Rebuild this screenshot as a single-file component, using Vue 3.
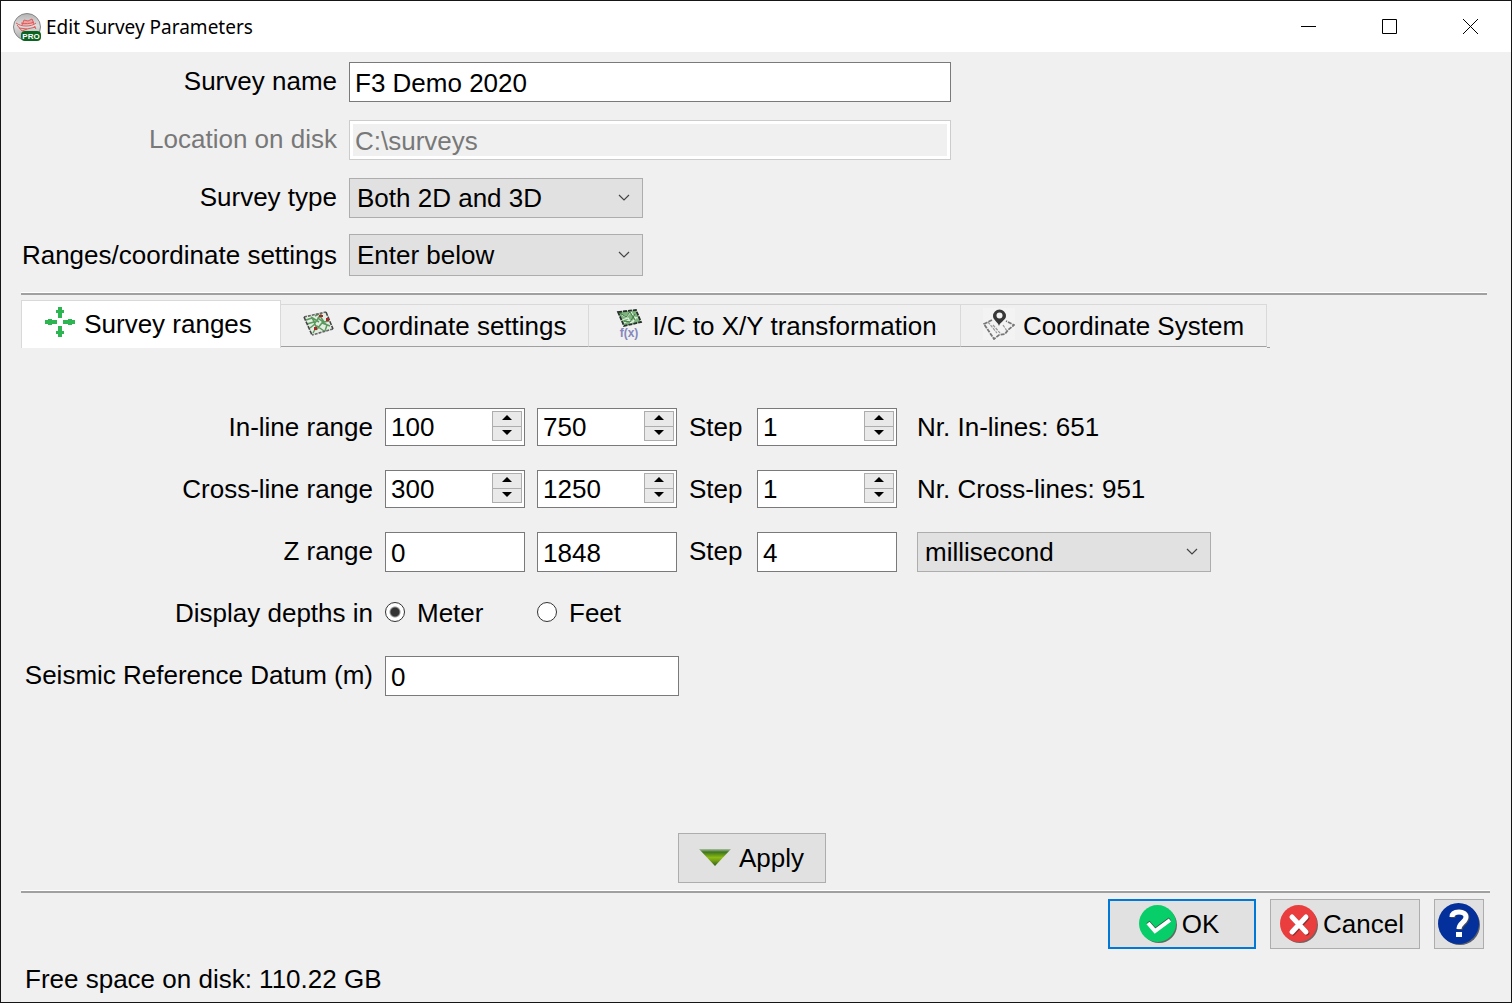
<script setup>
import { ref, reactive, computed } from 'vue'

const surveyName = ref('F3 Demo 2020')
const location = ref('C:\\surveys')
const surveyType = ref('Both 2D and 3D')
const settings = ref('Enter below')
const activeTab = ref('ranges')
const zUnit = ref('millisecond')
const depthUnit = ref('m')
const datum = ref('0')
const z = reactive({ start: '0', stop: '1848', step: '4' })

const tabs = [
  { id: 'ranges', label: 'Survey ranges' },
  { id: 'coords', label: 'Coordinate settings' },
  { id: 'transform', label: 'I/C to X/Y transformation' },
  { id: 'system', label: 'Coordinate System' },
]

const lines = reactive([
  { id: 'inl', label: 'In-line range', count: 'Nr. In-lines', start: 100, stop: 750, step: 1 },
  { id: 'crl', label: 'Cross-line range', count: 'Nr. Cross-lines', start: 300, stop: 1250, step: 1 },
])
const counts = computed(() =>
  lines.map((l) => Math.floor((l.stop - l.start) / Math.max(1, l.step)) + 1)
)
</script>

<template>
  <div class="window">
    <header class="titlebar">
      <svg class="app-icon" viewBox="0 0 28 28" aria-hidden="true">
        <defs>
          <linearGradient id="ball" x1="0" y1="0" x2="0" y2="1">
            <stop offset="0" stop-color="#b4b4b4" />
            <stop offset="0.45" stop-color="#dedede" />
            <stop offset="1" stop-color="#a8a8a8" />
          </linearGradient>
        </defs>
        <circle cx="14" cy="14" r="13.5" fill="url(#ball)" stroke="#858585" />
        <path d="M9 12l2-5 4 1 4-2 2 5z" fill="#e8a5a5" />
        <path d="M3 10c3 2 6 3 10 3s8-1 10-3M9 12l2-5 4 1 4-2 2 5M8 10c4 1 9 1 13-1M4 12l5 6M6 15l8 1 9-2M9 18l5-2M21 13l2 3" fill="none" stroke="#e25a5a" />
        <rect x="8" y="18" width="20" height="10" rx="4" fill="#0b6320" />
        <text x="18" y="26" text-anchor="middle" class="pro">PRO</text>
      </svg>
      <h1>Edit Survey Parameters</h1>
      <div class="controls">
        <button type="button" aria-label="Minimize">
          <svg viewBox="0 0 15 15"><path d="M0 7.5h15" /></svg>
        </button>
        <button type="button" aria-label="Maximize">
          <svg viewBox="0 0 15 15"><path d="M.5 .5h14v14h-14z" /></svg>
        </button>
        <button type="button" aria-label="Close">
          <svg viewBox="0 0 15 15"><path d="M0 0l15 15M15 0L0 15" /></svg>
        </button>
      </div>
    </header>

    <form class="content" @submit.prevent>
      <section class="general">
        <label for="name">Survey name</label>
        <input id="name" v-model="surveyName" type="text" class="long" />
        <label for="loc" class="off">Location on disk</label>
        <input id="loc" v-model="location" type="text" class="long" disabled />
        <label for="type">Survey type</label>
        <select id="type" v-model="surveyType" class="wide">
          <option>Both 2D and 3D</option>
          <option>Only 3D</option>
          <option>Only 2D</option>
        </select>
        <label for="settings">Ranges/coordinate settings</label>
        <select id="settings" v-model="settings" class="wide tall">
          <option>Enter below</option>
        </select>
      </section>

      <hr />

      <div class="tabs" role="tablist">
        <button
          v-for="tab in tabs"
          :key="tab.id"
          type="button"
          role="tab"
          :aria-selected="activeTab === tab.id"
          class="tab"
          :class="{ active: activeTab === tab.id }"
          @click="activeTab = tab.id"
        >
          <svg v-if="tab.id === 'ranges'" class="tab-icon" viewBox="0 0 32 32">
            <g fill="#2db552">
              <path d="M14 12V7h-2V4h2V1h4v3h2v3h-2v5z" />
              <path d="M14 20v5h-2v3h2v3h4v-3h2v-3h-2v-5z" />
              <path d="M13 14H8v-1H4v1H1v4h3v1h4v-1h5z" />
              <path d="M19 14h5v-1h4v1h3v4h-3v1h-4v-1h-5z" />
            </g>
          </svg>
          <svg v-else-if="tab.id === 'coords'" class="tab-icon" viewBox="0 0 32 32">
            <path d="M2 9l22-5 7 17-21 6z" fill="#e4eee2" />
            <path d="M4 12l6-2 3 5 5-7 4 6 5-1M5 16l7-2 3 7 5-6 8 3M8 20l5-4M11 25l4-7 7 5M9 9l8 5M20 5l-4 5 9 7-2 6M13 8l4-2" fill="none" stroke="#5a9a5e" stroke-width="1.5" />
            <path d="M2 9l22-5M31 21l-21 6" stroke="#666" stroke-width="1.6" stroke-dasharray="3 1" />
            <path d="M2 9l8 18M24 4l7 17" stroke="#444" stroke-width="1.6" stroke-dasharray="4 1" />
            <path d="M17 7h4v2h-4zM24 10h3v3h-3zM12 19h3v3h-3z" fill="#b3202c" />
          </svg>
          <svg v-else-if="tab.id === 'transform'" class="tab-icon" viewBox="0 0 32 32">
            <path d="M6 4l18-2 5 12-17 4z" fill="#7fb47f" />
            <path d="M10 7l4 2 5-5 3 5 4 1M10 12l6-2 3 5 5-5M12 15l5-3 5 2" fill="none" stroke="#dff0de" stroke-width="1.2" />
            <path d="M8 5l6 4 4-5 5 8M12 13l6 1 5-8" fill="none" stroke="#3f7a42" />
            <path d="M6 4l18-2 5 12-17 4z" fill="none" stroke="#26302a" stroke-width="1.8" stroke-dasharray="4 1" />
            <text x="17" y="29" text-anchor="middle" class="fx">f(x)</text>
          </svg>
          <svg v-else class="tab-icon" viewBox="0 0 32 32">
            <rect width="32" height="32" fill="#f3f3f3" />
            <path d="M9 12l-8 4 10 15 5-4 6-1 3-4 6-5-8-4" fill="none" stroke="#777" stroke-width="1.8" stroke-dasharray="4 1" />
            <path d="M5 14l9 11M10 17l7 8M20 17l4 6" fill="none" stroke="#999" stroke-width="1.2" stroke-dasharray="3 1" />
            <path d="M16 18c-1-4-6-6-6-10a6 6 0 0 1 13 0c0 4-6 6-7 10z" fill="#383838" />
            <circle cx="16.500" cy="7.500" r="3" fill="#f3f3f3" />
          </svg>
          <span>{{ tab.label }}</span>
        </button>
      </div>

      <section class="panel" role="tabpanel">
        <div class="ranges">
          <template v-for="(line, i) in lines" :key="line.id">
            <label :for="line.id + '-start'">{{ line.label }}</label>
            <template v-for="field in ['start', 'stop', 'step']" :key="field">
              <label v-if="field === 'step'" :for="line.id + '-step'" class="step">Step</label>
              <div class="spin">
                <input :id="line.id + '-' + field" v-model.number="line[field]" type="number" :aria-label="line.label + ' ' + field" />
                <div class="arrows">
                  <button type="button" aria-label="Increase" @click="line[field]++">
                    <svg viewBox="0 0 10 5"><path d="M5 0l5 5H0z" /></svg>
                  </button>
                  <button type="button" aria-label="Decrease" @click="line[field]--">
                    <svg viewBox="0 0 10 5"><path d="M0 0h10L5 5z" /></svg>
                  </button>
                </div>
              </div>
            </template>
            <output class="extra">{{ line.count }}: {{ counts[i] }}</output>
          </template>

          <label for="z-start">Z range</label>
          <input id="z-start" v-model="z.start" type="text" />
          <input v-model="z.stop" type="text" aria-label="Z range stop" />
          <label for="z-step" class="step">Step</label>
          <input id="z-step" v-model="z.step" type="text" />
          <div class="extra">
            <select v-model="zUnit" class="wide" aria-label="Z unit">
              <option>millisecond</option>
              <option>meter</option>
              <option>feet</option>
            </select>
          </div>

          <span class="caption">Display depths in</span>
          <label class="radio">
            <input v-model="depthUnit" type="radio" name="depth" value="m" />Meter
          </label>
          <label class="radio rest">
            <input v-model="depthUnit" type="radio" name="depth" value="ft" />Feet
          </label>

          <label for="datum">Seismic Reference Datum (m)</label>
          <input id="datum" v-model="datum" type="text" class="wide datum" />
        </div>

        <button type="button" class="push apply">
          <svg class="arrow" viewBox="0 0 32 18">
            <defs>
              <linearGradient id="leaf" x1="0" y1="0" x2="0" y2="1">
                <stop offset="0" stop-color="#a9bfa2" />
                <stop offset="0.18" stop-color="#3d7420" />
                <stop offset="0.5" stop-color="#8cba14" />
                <stop offset="0.7" stop-color="#6f9c14" />
                <stop offset="1" stop-color="#2e5c1c" />
              </linearGradient>
            </defs>
            <path d="M0 0h32L16 17z" fill="url(#leaf)" />
          </svg>
          <span>Apply</span>
        </button>
      </section>

      <hr />

      <footer class="actions">
        <button type="submit" class="push answer default">
          <svg class="badge" viewBox="0 0 38 38">
            <circle cx="20" cy="20" r="18" fill="#5d6b63" />
            <circle cx="18.500" cy="18.500" r="18.500" fill="#07ce68" />
            <path d="M9 17l7 8 15-11" fill="none" stroke="#2c5a40" stroke-width="4" />
            <path d="M9 18l7 8 15-11" fill="none" stroke="#fff" stroke-width="4" />
          </svg>
          <span>OK</span>
        </button>
        <button type="button" class="push answer cancel">
          <svg class="badge" viewBox="0 0 38 38">
            <circle cx="20" cy="20" r="18" fill="#77605f" />
            <circle cx="18.500" cy="18.500" r="18.500" fill="#ea3e3e" />
            <path d="M13 13l14 15M27 13L13 28" fill="none" stroke="#8b3030" stroke-width="5" stroke-linecap="round" />
            <path d="M12 12l14 15M26 12L12 27" fill="none" stroke="#fff" stroke-width="5" stroke-linecap="round" />
          </svg>
          <span>Cancel</span>
        </button>
        <button type="button" class="push help" aria-label="Help">
          <svg viewBox="0 0 42 42">
            <circle cx="22" cy="22" r="20" fill="#5b5f6b" />
            <circle cx="20.500" cy="20.500" r="20.500" fill="#03309b" />
            <path d="M15 15c0-5 3-6 7-6s7 2 7 6c0 5-7 6-7 12" fill="none" stroke="#444a60" stroke-width="5" />
            <path d="M14 14c0-4 3-5 7-5s7 2 7 5c0 5-7 6-7 12" fill="none" stroke="#fff" stroke-width="5" />
            <path d="M18 29h6v5h-6z" fill="#fff" />
          </svg>
        </button>
      </footer>
    </form>
    <p class="status">Free space on disk: 110.22 GB</p>
  </div>
</template>

<style>
body {
  background: #f0f0f0;
}
</style>

<style scoped>
.window,
.window * {
  box-sizing: border-box;
}
.window {
  display: flex;
  flex-direction: column;
  min-height: 100vh;
  border: 1px solid #151515;
  background: #f0f0f0;
  color: #000;
  font: 26px/30px "Liberation Sans", Arial, sans-serif;
}
input,
select,
button {
  margin: 0;
  font: inherit;
  color: inherit;
  border-radius: 0;
}
svg {
  display: block;
  flex: none;
}

.titlebar {
  display: flex;
  align-items: center;
  height: 51px;
  padding-left: 12px;
  background: #fff;
}
.app-icon {
  width: 28px;
  height: 28px;
}
.pro {
  font: bold 8px "Liberation Sans", Arial, sans-serif;
  fill: #fff;
}
.titlebar h1 {
  margin: 0 auto 0 5px;
  font: 19px/28px "Noto Sans", sans-serif;
}
.controls {
  display: flex;
  align-self: stretch;
}
.controls button {
  display: grid;
  place-items: center;
  width: 81px;
  padding: 0;
  border: 0;
  background: none;
}
.controls svg {
  width: 15px;
  height: 15px;
}
.controls path {
  fill: none;
  stroke: #000;
}

.content {
  display: flex;
  flex: 1;
  flex-direction: column;
  padding: 10px 21px 0 20px;
}
.general {
  display: grid;
  grid-template-columns: 316px 1fr;
  gap: 18px 12px;
  grid-auto-rows: 40px;
}
label,
.caption {
  line-height: 38px;
  text-align: right;
  white-space: nowrap;
}
.off {
  color: #787878;
}
input[type="text"] {
  width: 100%;
  height: 40px;
  padding: 3px 5px 0;
  border: 1px solid #7a7a7a;
  background: #fff;
  outline: 0;
}
input.long {
  width: 602px;
}
input[type="text"]:disabled {
  border-color: #ccc;
  background: #f0f0f0;
  color: #787878;
  box-shadow: inset 0 0 0 3px #fff;
}
select {
  appearance: none;
  height: 40px;
  padding: 0 36px 0 7px;
  border: 1px solid #adadad;
  background: #e1e1e1 url("data:image/svg+xml,%3Csvg xmlns='http://www.w3.org/2000/svg' width='12' height='8'%3E%3Cpath d='M1 1l5 5 5-5' fill='none' stroke='%23444' stroke-width='1.2'/%3E%3C/svg%3E") no-repeat right 12px center;
}
select.wide,
input.wide {
  width: 294px;
}
.tall {
  align-self: end;
  height: 42px;
}
hr {
  height: 3px;
  margin: 16px 3px 5px 0;
  border: 0;
  border-top: 1px solid #fff;
  background: #a0a0a0;
}

.tabs {
  display: grid;
  grid-template-columns: 260px 308px 372px 306px 3px;
  align-items: start;
  height: 48px;
}
.tabs::after {
  content: "";
  height: 47px;
  border-bottom: 1px solid #a0a0a0;
}
.tab {
  display: flex;
  align-items: center;
  justify-content: center;
  gap: 8px;
  height: 43px;
  margin-top: 4px;
  padding: 0;
  border: solid #d9d9d9;
  border-width: 1px 1px 1px 0;
  border-bottom-color: #a0a0a0;
  background: #f0f0f0;
  white-space: nowrap;
}
.tab.active {
  height: 48px;
  margin-top: 0;
  padding: 0 6px 2px 0;
  border-width: 1px 1px 0 1px;
  background: #fff;
}
.tab-icon {
  width: 32px;
  height: 32px;
  margin-bottom: 4px;
}
.fx {
  font: bold 12px "Liberation Sans", Arial, sans-serif;
  fill: #8587bd;
}

.panel {
  display: flex;
  flex: 1;
  flex-direction: column;
  padding-top: 60px;
}
.ranges {
  display: grid;
  grid-template-columns: 352px 140px 140px 56px 140px 1fr;
  grid-auto-rows: 40px;
  gap: 22px 12px;
}
.step {
  text-align: left;
}
.extra {
  padding-left: 8px;
  line-height: 38px;
}
.extra select {
  display: block;
}
.spin {
  display: flex;
  height: 38px;
  padding: 2px 2px 4px 5px;
  border: 1px solid #7a7a7a;
  background: #fff;
}
.spin input {
  appearance: textfield;
  flex: 1;
  min-width: 0;
  padding: 2px 0 0;
  border: 0;
  background: none;
  outline: 0;
}
.spin input::-webkit-inner-spin-button {
  appearance: none;
}
.arrows {
  display: flex;
  flex-direction: column;
  width: 30px;
  border: 1px solid #adadad;
}
.arrows button {
  display: grid;
  flex: 1;
  place-items: center;
  padding: 0 1px 2px 0;
  border: 0;
  background: #e9e9e9;
}
.arrows button + button {
  border-top: 1px solid #adadad;
}
.arrows svg {
  width: 10px;
  height: 5px;
}
.radio {
  display: flex;
  align-items: center;
  gap: 12px;
  height: 38px;
}
.rest {
  grid-column: 3 / -1;
}
.radio input {
  appearance: none;
  width: 20px;
  height: 20px;
  margin-bottom: 2px;
  border: 1px solid #333;
  border-radius: 50%;
  background: #fff;
}
.radio input:checked {
  background: radial-gradient(circle, #333 4px, #fff 6px);
}
.datum {
  grid-column: 2 / -1;
}

.push {
  display: flex;
  align-items: center;
  justify-content: center;
  gap: 8px;
  width: 148px;
  height: 50px;
  padding: 0;
  border: 1px solid #adadad;
  background: #e1e1e1;
}
.apply {
  align-self: center;
  margin: auto 8px 0 0;
}
.panel + hr {
  margin: 7px 0 6px;
}
.arrow {
  width: 32px;
  height: 18px;
}
.badge {
  width: 38px;
  height: 38px;
}
.actions {
  display: flex;
  justify-content: flex-end;
  gap: 14px;
  padding-right: 6px;
}
.answer {
  gap: 5px;
  padding-right: 6px;
}
.default {
  border: 2px solid #0078d7;
}
.cancel {
  width: 150px;
}
.help {
  width: 50px;
}
.help svg {
  width: 42px;
  height: 42px;
}
.status {
  margin: 15px 0 8px 24px;
}
</style>
